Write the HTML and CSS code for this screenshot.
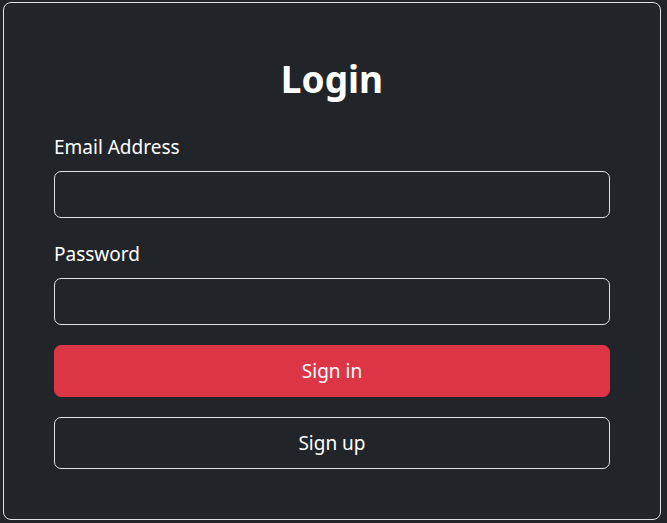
FILE: index.html
```html
<!DOCTYPE html>
<html lang="en">
<head>
<meta charset="utf-8">
<title>Login</title>
<link rel="stylesheet" href="styles.css">
</head>
<body>
<div class="card">
  <h1 class="title">Login</h1>
  <form class="form">
    <label class="label" for="email">Email Address</label>
    <input class="input" id="email" type="email">
    <label class="label label-gap" for="password">Password</label>
    <input class="input" id="password" type="password">
    <button class="btn btn-primary" type="button">Sign in</button>
    <button class="btn btn-outline" type="button">Sign up</button>
  </form>
</div>
</body>
</html>
```
FILE: styles.css
```css
html, body {
  margin: 0;
  background: #212529;
}
body {
  padding: 2px 6px 3px 3px;
  font-family: "Noto Sans", "Open Sans", sans-serif;
  color: #fff;
}
.card {
  box-sizing: border-box;
  width: 658px;
  height: 518px;
  border: 1px solid #dee2e6;
  border-radius: 8px;
  padding: 52px 50px 48px 50px;
}
.title {
  margin: 0 0 29px;
  text-align: center;
  font-size: 37px;
  line-height: 48px;
  font-weight: 700;
}
.form {
  display: flex;
  flex-direction: column;
}
.label {
  font-size: 19px;
  line-height: 30px;
  margin-bottom: 9px;
}
.label-gap {
  margin-top: 21px;
}
.input {
  box-sizing: border-box;
  height: 47px;
  width: 100%;
  background: #212529;
  border: 1px solid #dee2e6;
  border-radius: 7px;
  color: #fff;
  font: inherit;
  padding: 0 16px;
}
.btn {
  box-sizing: border-box;
  height: 52px;
  width: 100%;
  border-radius: 7px;
  font-family: inherit;
  font-size: 19px;
  color: #fff;
  cursor: pointer;
}
.btn-primary {
  margin-top: 20px;
  background: #dc3545;
  border: 1px solid #dc3545;
}
.btn-outline {
  margin-top: 20px;
  background: transparent;
  border: 1px solid #dee2e6;
}
```
